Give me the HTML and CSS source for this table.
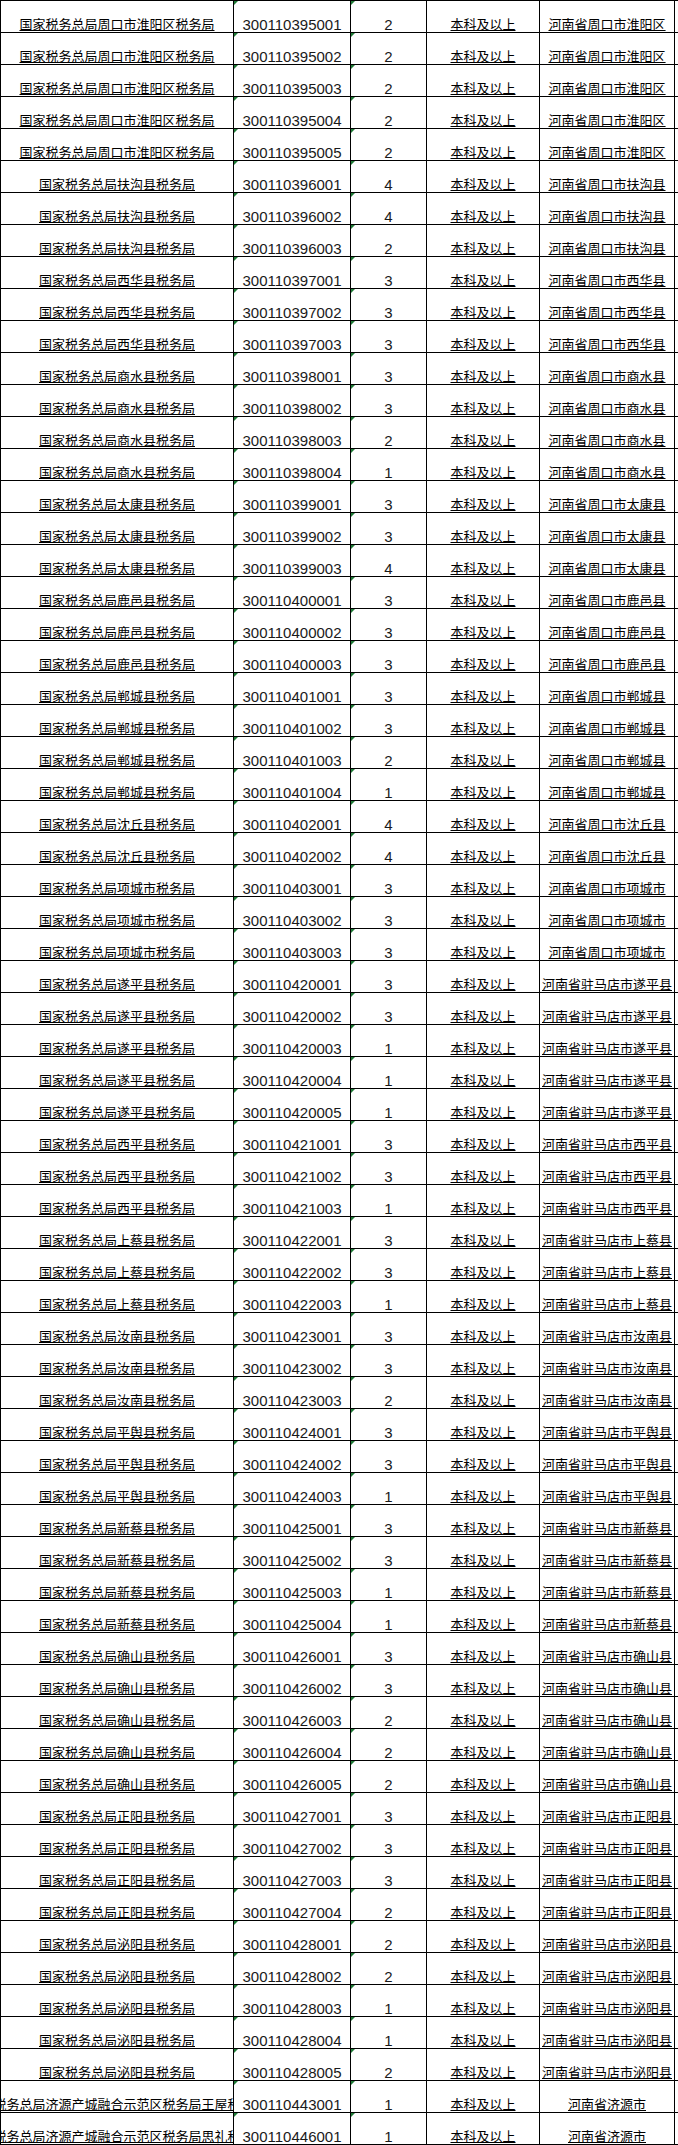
FILE: index.html
```html
<!DOCTYPE html>
<html lang="zh-CN">
<head>
<meta charset="utf-8">
<title>职位表</title>
<link rel="stylesheet" href="styles.css">
</head>
<body>
<div class="sheet">
<div class="row"><div class="c name"><span>国家税务总局周口市淮阳区税务局</span></div><div class="c num flag"><span>300110395001</span></div><div class="c num flag"><span>2</span></div><div class="c txt"><span>本科及以上</span></div><div class="c txt"><span>河南省周口市淮阳区</span></div><div class="c pad"></div></div>
<div class="row"><div class="c name"><span>国家税务总局周口市淮阳区税务局</span></div><div class="c num flag"><span>300110395002</span></div><div class="c num flag"><span>2</span></div><div class="c txt"><span>本科及以上</span></div><div class="c txt"><span>河南省周口市淮阳区</span></div><div class="c pad"></div></div>
<div class="row"><div class="c name"><span>国家税务总局周口市淮阳区税务局</span></div><div class="c num flag"><span>300110395003</span></div><div class="c num flag"><span>2</span></div><div class="c txt"><span>本科及以上</span></div><div class="c txt"><span>河南省周口市淮阳区</span></div><div class="c pad"></div></div>
<div class="row"><div class="c name"><span>国家税务总局周口市淮阳区税务局</span></div><div class="c num flag"><span>300110395004</span></div><div class="c num flag"><span>2</span></div><div class="c txt"><span>本科及以上</span></div><div class="c txt"><span>河南省周口市淮阳区</span></div><div class="c pad"></div></div>
<div class="row"><div class="c name"><span>国家税务总局周口市淮阳区税务局</span></div><div class="c num flag"><span>300110395005</span></div><div class="c num flag"><span>2</span></div><div class="c txt"><span>本科及以上</span></div><div class="c txt"><span>河南省周口市淮阳区</span></div><div class="c pad"></div></div>
<div class="row"><div class="c name"><span>国家税务总局扶沟县税务局</span></div><div class="c num flag"><span>300110396001</span></div><div class="c num flag"><span>4</span></div><div class="c txt"><span>本科及以上</span></div><div class="c txt"><span>河南省周口市扶沟县</span></div><div class="c pad"></div></div>
<div class="row"><div class="c name"><span>国家税务总局扶沟县税务局</span></div><div class="c num flag"><span>300110396002</span></div><div class="c num flag"><span>4</span></div><div class="c txt"><span>本科及以上</span></div><div class="c txt"><span>河南省周口市扶沟县</span></div><div class="c pad"></div></div>
<div class="row"><div class="c name"><span>国家税务总局扶沟县税务局</span></div><div class="c num flag"><span>300110396003</span></div><div class="c num flag"><span>2</span></div><div class="c txt"><span>本科及以上</span></div><div class="c txt"><span>河南省周口市扶沟县</span></div><div class="c pad"></div></div>
<div class="row"><div class="c name"><span>国家税务总局西华县税务局</span></div><div class="c num flag"><span>300110397001</span></div><div class="c num flag"><span>3</span></div><div class="c txt"><span>本科及以上</span></div><div class="c txt"><span>河南省周口市西华县</span></div><div class="c pad"></div></div>
<div class="row"><div class="c name"><span>国家税务总局西华县税务局</span></div><div class="c num flag"><span>300110397002</span></div><div class="c num flag"><span>3</span></div><div class="c txt"><span>本科及以上</span></div><div class="c txt"><span>河南省周口市西华县</span></div><div class="c pad"></div></div>
<div class="row"><div class="c name"><span>国家税务总局西华县税务局</span></div><div class="c num flag"><span>300110397003</span></div><div class="c num flag"><span>3</span></div><div class="c txt"><span>本科及以上</span></div><div class="c txt"><span>河南省周口市西华县</span></div><div class="c pad"></div></div>
<div class="row"><div class="c name"><span>国家税务总局商水县税务局</span></div><div class="c num flag"><span>300110398001</span></div><div class="c num flag"><span>3</span></div><div class="c txt"><span>本科及以上</span></div><div class="c txt"><span>河南省周口市商水县</span></div><div class="c pad"></div></div>
<div class="row"><div class="c name"><span>国家税务总局商水县税务局</span></div><div class="c num flag"><span>300110398002</span></div><div class="c num flag"><span>3</span></div><div class="c txt"><span>本科及以上</span></div><div class="c txt"><span>河南省周口市商水县</span></div><div class="c pad"></div></div>
<div class="row"><div class="c name"><span>国家税务总局商水县税务局</span></div><div class="c num flag"><span>300110398003</span></div><div class="c num flag"><span>2</span></div><div class="c txt"><span>本科及以上</span></div><div class="c txt"><span>河南省周口市商水县</span></div><div class="c pad"></div></div>
<div class="row"><div class="c name"><span>国家税务总局商水县税务局</span></div><div class="c num flag"><span>300110398004</span></div><div class="c num flag"><span>1</span></div><div class="c txt"><span>本科及以上</span></div><div class="c txt"><span>河南省周口市商水县</span></div><div class="c pad"></div></div>
<div class="row"><div class="c name"><span>国家税务总局太康县税务局</span></div><div class="c num flag"><span>300110399001</span></div><div class="c num flag"><span>3</span></div><div class="c txt"><span>本科及以上</span></div><div class="c txt"><span>河南省周口市太康县</span></div><div class="c pad"></div></div>
<div class="row"><div class="c name"><span>国家税务总局太康县税务局</span></div><div class="c num flag"><span>300110399002</span></div><div class="c num flag"><span>3</span></div><div class="c txt"><span>本科及以上</span></div><div class="c txt"><span>河南省周口市太康县</span></div><div class="c pad"></div></div>
<div class="row"><div class="c name"><span>国家税务总局太康县税务局</span></div><div class="c num flag"><span>300110399003</span></div><div class="c num flag"><span>4</span></div><div class="c txt"><span>本科及以上</span></div><div class="c txt"><span>河南省周口市太康县</span></div><div class="c pad"></div></div>
<div class="row"><div class="c name"><span>国家税务总局鹿邑县税务局</span></div><div class="c num flag"><span>300110400001</span></div><div class="c num flag"><span>3</span></div><div class="c txt"><span>本科及以上</span></div><div class="c txt"><span>河南省周口市鹿邑县</span></div><div class="c pad"></div></div>
<div class="row"><div class="c name"><span>国家税务总局鹿邑县税务局</span></div><div class="c num flag"><span>300110400002</span></div><div class="c num flag"><span>3</span></div><div class="c txt"><span>本科及以上</span></div><div class="c txt"><span>河南省周口市鹿邑县</span></div><div class="c pad"></div></div>
<div class="row"><div class="c name"><span>国家税务总局鹿邑县税务局</span></div><div class="c num flag"><span>300110400003</span></div><div class="c num flag"><span>3</span></div><div class="c txt"><span>本科及以上</span></div><div class="c txt"><span>河南省周口市鹿邑县</span></div><div class="c pad"></div></div>
<div class="row"><div class="c name"><span>国家税务总局郸城县税务局</span></div><div class="c num flag"><span>300110401001</span></div><div class="c num flag"><span>3</span></div><div class="c txt"><span>本科及以上</span></div><div class="c txt"><span>河南省周口市郸城县</span></div><div class="c pad"></div></div>
<div class="row"><div class="c name"><span>国家税务总局郸城县税务局</span></div><div class="c num flag"><span>300110401002</span></div><div class="c num flag"><span>3</span></div><div class="c txt"><span>本科及以上</span></div><div class="c txt"><span>河南省周口市郸城县</span></div><div class="c pad"></div></div>
<div class="row"><div class="c name"><span>国家税务总局郸城县税务局</span></div><div class="c num flag"><span>300110401003</span></div><div class="c num flag"><span>2</span></div><div class="c txt"><span>本科及以上</span></div><div class="c txt"><span>河南省周口市郸城县</span></div><div class="c pad"></div></div>
<div class="row"><div class="c name"><span>国家税务总局郸城县税务局</span></div><div class="c num flag"><span>300110401004</span></div><div class="c num flag"><span>1</span></div><div class="c txt"><span>本科及以上</span></div><div class="c txt"><span>河南省周口市郸城县</span></div><div class="c pad"></div></div>
<div class="row"><div class="c name"><span>国家税务总局沈丘县税务局</span></div><div class="c num flag"><span>300110402001</span></div><div class="c num flag"><span>4</span></div><div class="c txt"><span>本科及以上</span></div><div class="c txt"><span>河南省周口市沈丘县</span></div><div class="c pad"></div></div>
<div class="row"><div class="c name"><span>国家税务总局沈丘县税务局</span></div><div class="c num flag"><span>300110402002</span></div><div class="c num flag"><span>4</span></div><div class="c txt"><span>本科及以上</span></div><div class="c txt"><span>河南省周口市沈丘县</span></div><div class="c pad"></div></div>
<div class="row"><div class="c name"><span>国家税务总局项城市税务局</span></div><div class="c num flag"><span>300110403001</span></div><div class="c num flag"><span>3</span></div><div class="c txt"><span>本科及以上</span></div><div class="c txt"><span>河南省周口市项城市</span></div><div class="c pad"></div></div>
<div class="row"><div class="c name"><span>国家税务总局项城市税务局</span></div><div class="c num flag"><span>300110403002</span></div><div class="c num flag"><span>3</span></div><div class="c txt"><span>本科及以上</span></div><div class="c txt"><span>河南省周口市项城市</span></div><div class="c pad"></div></div>
<div class="row"><div class="c name"><span>国家税务总局项城市税务局</span></div><div class="c num flag"><span>300110403003</span></div><div class="c num flag"><span>3</span></div><div class="c txt"><span>本科及以上</span></div><div class="c txt"><span>河南省周口市项城市</span></div><div class="c pad"></div></div>
<div class="row"><div class="c name"><span>国家税务总局遂平县税务局</span></div><div class="c num flag"><span>300110420001</span></div><div class="c num flag"><span>3</span></div><div class="c txt"><span>本科及以上</span></div><div class="c txt"><span>河南省驻马店市遂平县</span></div><div class="c pad"></div></div>
<div class="row"><div class="c name"><span>国家税务总局遂平县税务局</span></div><div class="c num flag"><span>300110420002</span></div><div class="c num flag"><span>3</span></div><div class="c txt"><span>本科及以上</span></div><div class="c txt"><span>河南省驻马店市遂平县</span></div><div class="c pad"></div></div>
<div class="row"><div class="c name"><span>国家税务总局遂平县税务局</span></div><div class="c num flag"><span>300110420003</span></div><div class="c num flag"><span>1</span></div><div class="c txt"><span>本科及以上</span></div><div class="c txt"><span>河南省驻马店市遂平县</span></div><div class="c pad"></div></div>
<div class="row"><div class="c name"><span>国家税务总局遂平县税务局</span></div><div class="c num flag"><span>300110420004</span></div><div class="c num flag"><span>1</span></div><div class="c txt"><span>本科及以上</span></div><div class="c txt"><span>河南省驻马店市遂平县</span></div><div class="c pad"></div></div>
<div class="row"><div class="c name"><span>国家税务总局遂平县税务局</span></div><div class="c num flag"><span>300110420005</span></div><div class="c num flag"><span>1</span></div><div class="c txt"><span>本科及以上</span></div><div class="c txt"><span>河南省驻马店市遂平县</span></div><div class="c pad"></div></div>
<div class="row"><div class="c name"><span>国家税务总局西平县税务局</span></div><div class="c num flag"><span>300110421001</span></div><div class="c num flag"><span>3</span></div><div class="c txt"><span>本科及以上</span></div><div class="c txt"><span>河南省驻马店市西平县</span></div><div class="c pad"></div></div>
<div class="row"><div class="c name"><span>国家税务总局西平县税务局</span></div><div class="c num flag"><span>300110421002</span></div><div class="c num flag"><span>3</span></div><div class="c txt"><span>本科及以上</span></div><div class="c txt"><span>河南省驻马店市西平县</span></div><div class="c pad"></div></div>
<div class="row"><div class="c name"><span>国家税务总局西平县税务局</span></div><div class="c num flag"><span>300110421003</span></div><div class="c num flag"><span>1</span></div><div class="c txt"><span>本科及以上</span></div><div class="c txt"><span>河南省驻马店市西平县</span></div><div class="c pad"></div></div>
<div class="row"><div class="c name"><span>国家税务总局上蔡县税务局</span></div><div class="c num flag"><span>300110422001</span></div><div class="c num flag"><span>3</span></div><div class="c txt"><span>本科及以上</span></div><div class="c txt"><span>河南省驻马店市上蔡县</span></div><div class="c pad"></div></div>
<div class="row"><div class="c name"><span>国家税务总局上蔡县税务局</span></div><div class="c num flag"><span>300110422002</span></div><div class="c num flag"><span>3</span></div><div class="c txt"><span>本科及以上</span></div><div class="c txt"><span>河南省驻马店市上蔡县</span></div><div class="c pad"></div></div>
<div class="row"><div class="c name"><span>国家税务总局上蔡县税务局</span></div><div class="c num flag"><span>300110422003</span></div><div class="c num flag"><span>1</span></div><div class="c txt"><span>本科及以上</span></div><div class="c txt"><span>河南省驻马店市上蔡县</span></div><div class="c pad"></div></div>
<div class="row"><div class="c name"><span>国家税务总局汝南县税务局</span></div><div class="c num flag"><span>300110423001</span></div><div class="c num flag"><span>3</span></div><div class="c txt"><span>本科及以上</span></div><div class="c txt"><span>河南省驻马店市汝南县</span></div><div class="c pad"></div></div>
<div class="row"><div class="c name"><span>国家税务总局汝南县税务局</span></div><div class="c num flag"><span>300110423002</span></div><div class="c num flag"><span>3</span></div><div class="c txt"><span>本科及以上</span></div><div class="c txt"><span>河南省驻马店市汝南县</span></div><div class="c pad"></div></div>
<div class="row"><div class="c name"><span>国家税务总局汝南县税务局</span></div><div class="c num flag"><span>300110423003</span></div><div class="c num flag"><span>2</span></div><div class="c txt"><span>本科及以上</span></div><div class="c txt"><span>河南省驻马店市汝南县</span></div><div class="c pad"></div></div>
<div class="row"><div class="c name"><span>国家税务总局平舆县税务局</span></div><div class="c num flag"><span>300110424001</span></div><div class="c num flag"><span>3</span></div><div class="c txt"><span>本科及以上</span></div><div class="c txt"><span>河南省驻马店市平舆县</span></div><div class="c pad"></div></div>
<div class="row"><div class="c name"><span>国家税务总局平舆县税务局</span></div><div class="c num flag"><span>300110424002</span></div><div class="c num flag"><span>3</span></div><div class="c txt"><span>本科及以上</span></div><div class="c txt"><span>河南省驻马店市平舆县</span></div><div class="c pad"></div></div>
<div class="row"><div class="c name"><span>国家税务总局平舆县税务局</span></div><div class="c num flag"><span>300110424003</span></div><div class="c num flag"><span>1</span></div><div class="c txt"><span>本科及以上</span></div><div class="c txt"><span>河南省驻马店市平舆县</span></div><div class="c pad"></div></div>
<div class="row"><div class="c name"><span>国家税务总局新蔡县税务局</span></div><div class="c num flag"><span>300110425001</span></div><div class="c num flag"><span>3</span></div><div class="c txt"><span>本科及以上</span></div><div class="c txt"><span>河南省驻马店市新蔡县</span></div><div class="c pad"></div></div>
<div class="row"><div class="c name"><span>国家税务总局新蔡县税务局</span></div><div class="c num flag"><span>300110425002</span></div><div class="c num flag"><span>3</span></div><div class="c txt"><span>本科及以上</span></div><div class="c txt"><span>河南省驻马店市新蔡县</span></div><div class="c pad"></div></div>
<div class="row"><div class="c name"><span>国家税务总局新蔡县税务局</span></div><div class="c num flag"><span>300110425003</span></div><div class="c num flag"><span>1</span></div><div class="c txt"><span>本科及以上</span></div><div class="c txt"><span>河南省驻马店市新蔡县</span></div><div class="c pad"></div></div>
<div class="row"><div class="c name"><span>国家税务总局新蔡县税务局</span></div><div class="c num flag"><span>300110425004</span></div><div class="c num flag"><span>1</span></div><div class="c txt"><span>本科及以上</span></div><div class="c txt"><span>河南省驻马店市新蔡县</span></div><div class="c pad"></div></div>
<div class="row"><div class="c name"><span>国家税务总局确山县税务局</span></div><div class="c num flag"><span>300110426001</span></div><div class="c num flag"><span>3</span></div><div class="c txt"><span>本科及以上</span></div><div class="c txt"><span>河南省驻马店市确山县</span></div><div class="c pad"></div></div>
<div class="row"><div class="c name"><span>国家税务总局确山县税务局</span></div><div class="c num flag"><span>300110426002</span></div><div class="c num flag"><span>3</span></div><div class="c txt"><span>本科及以上</span></div><div class="c txt"><span>河南省驻马店市确山县</span></div><div class="c pad"></div></div>
<div class="row"><div class="c name"><span>国家税务总局确山县税务局</span></div><div class="c num flag"><span>300110426003</span></div><div class="c num flag"><span>2</span></div><div class="c txt"><span>本科及以上</span></div><div class="c txt"><span>河南省驻马店市确山县</span></div><div class="c pad"></div></div>
<div class="row"><div class="c name"><span>国家税务总局确山县税务局</span></div><div class="c num flag"><span>300110426004</span></div><div class="c num flag"><span>2</span></div><div class="c txt"><span>本科及以上</span></div><div class="c txt"><span>河南省驻马店市确山县</span></div><div class="c pad"></div></div>
<div class="row"><div class="c name"><span>国家税务总局确山县税务局</span></div><div class="c num flag"><span>300110426005</span></div><div class="c num flag"><span>2</span></div><div class="c txt"><span>本科及以上</span></div><div class="c txt"><span>河南省驻马店市确山县</span></div><div class="c pad"></div></div>
<div class="row"><div class="c name"><span>国家税务总局正阳县税务局</span></div><div class="c num flag"><span>300110427001</span></div><div class="c num flag"><span>3</span></div><div class="c txt"><span>本科及以上</span></div><div class="c txt"><span>河南省驻马店市正阳县</span></div><div class="c pad"></div></div>
<div class="row"><div class="c name"><span>国家税务总局正阳县税务局</span></div><div class="c num flag"><span>300110427002</span></div><div class="c num flag"><span>3</span></div><div class="c txt"><span>本科及以上</span></div><div class="c txt"><span>河南省驻马店市正阳县</span></div><div class="c pad"></div></div>
<div class="row"><div class="c name"><span>国家税务总局正阳县税务局</span></div><div class="c num flag"><span>300110427003</span></div><div class="c num flag"><span>3</span></div><div class="c txt"><span>本科及以上</span></div><div class="c txt"><span>河南省驻马店市正阳县</span></div><div class="c pad"></div></div>
<div class="row"><div class="c name"><span>国家税务总局正阳县税务局</span></div><div class="c num flag"><span>300110427004</span></div><div class="c num flag"><span>2</span></div><div class="c txt"><span>本科及以上</span></div><div class="c txt"><span>河南省驻马店市正阳县</span></div><div class="c pad"></div></div>
<div class="row"><div class="c name"><span>国家税务总局泌阳县税务局</span></div><div class="c num flag"><span>300110428001</span></div><div class="c num flag"><span>2</span></div><div class="c txt"><span>本科及以上</span></div><div class="c txt"><span>河南省驻马店市泌阳县</span></div><div class="c pad"></div></div>
<div class="row"><div class="c name"><span>国家税务总局泌阳县税务局</span></div><div class="c num flag"><span>300110428002</span></div><div class="c num flag"><span>2</span></div><div class="c txt"><span>本科及以上</span></div><div class="c txt"><span>河南省驻马店市泌阳县</span></div><div class="c pad"></div></div>
<div class="row"><div class="c name"><span>国家税务总局泌阳县税务局</span></div><div class="c num flag"><span>300110428003</span></div><div class="c num flag"><span>1</span></div><div class="c txt"><span>本科及以上</span></div><div class="c txt"><span>河南省驻马店市泌阳县</span></div><div class="c pad"></div></div>
<div class="row"><div class="c name"><span>国家税务总局泌阳县税务局</span></div><div class="c num flag"><span>300110428004</span></div><div class="c num flag"><span>1</span></div><div class="c txt"><span>本科及以上</span></div><div class="c txt"><span>河南省驻马店市泌阳县</span></div><div class="c pad"></div></div>
<div class="row"><div class="c name"><span>国家税务总局泌阳县税务局</span></div><div class="c num flag"><span>300110428005</span></div><div class="c num flag"><span>2</span></div><div class="c txt"><span>本科及以上</span></div><div class="c txt"><span>河南省驻马店市泌阳县</span></div><div class="c pad"></div></div>
<div class="row"><div class="c name"><span>国家税务总局济源产城融合示范区税务局王屋税务所</span></div><div class="c num flag"><span>300110443001</span></div><div class="c num flag"><span>1</span></div><div class="c txt"><span>本科及以上</span></div><div class="c txt"><span>河南省济源市</span></div><div class="c pad"></div></div>
<div class="row"><div class="c name"><span>国家税务总局济源产城融合示范区税务局思礼税务所</span></div><div class="c num flag"><span>300110446001</span></div><div class="c num flag"><span>1</span></div><div class="c txt"><span>本科及以上</span></div><div class="c txt"><span>河南省济源市</span></div><div class="c pad"></div></div>
</div>
</body>
</html>
```

FILE: styles.css
```css
html, body {
  margin: 0;
  padding: 0;
  background: #ffffff;
}

body {
  width: 678px;
  color: #000000;
  font-family: "Liberation Sans", "Noto Sans CJK SC", sans-serif;
  font-size: 13px;
}

.sheet {
  display: flex;
  flex-direction: column;
  width: 678px;
  box-sizing: border-box;
  border-top: 1px solid #000000;
  border-left: 1px solid #000000;
}

.row {
  display: grid;
  grid-template-columns: 233px 117px 76px 113px 135px 3px;
  height: 32px;
}

.c {
  position: relative;
  display: flex;
  justify-content: center;
  align-items: flex-end;
  overflow: hidden;
  white-space: nowrap;
  box-sizing: border-box;
  height: 32px;
  border-right: 1px solid #000000;
  border-bottom: 1px solid #000000;
  line-height: 15px;
}

.c > span {
  flex: none;
  display: block;
}

.name > span,
.txt > span {
  text-decoration: underline;
  text-decoration-thickness: 1px;
}

.num {
  font-family: "Liberation Sans Narrow", "Liberation Sans", sans-serif;
  font-size: 15px;
  color: #1a1a1a;
}

.pad {
  border-right: none;
}

.flag::before {
  content: "";
  position: absolute;
  top: 0;
  left: 0;
  width: 0;
  height: 0;
  border-top: 4px solid #1f7a36;
  border-right: 4px solid transparent;
}
```
